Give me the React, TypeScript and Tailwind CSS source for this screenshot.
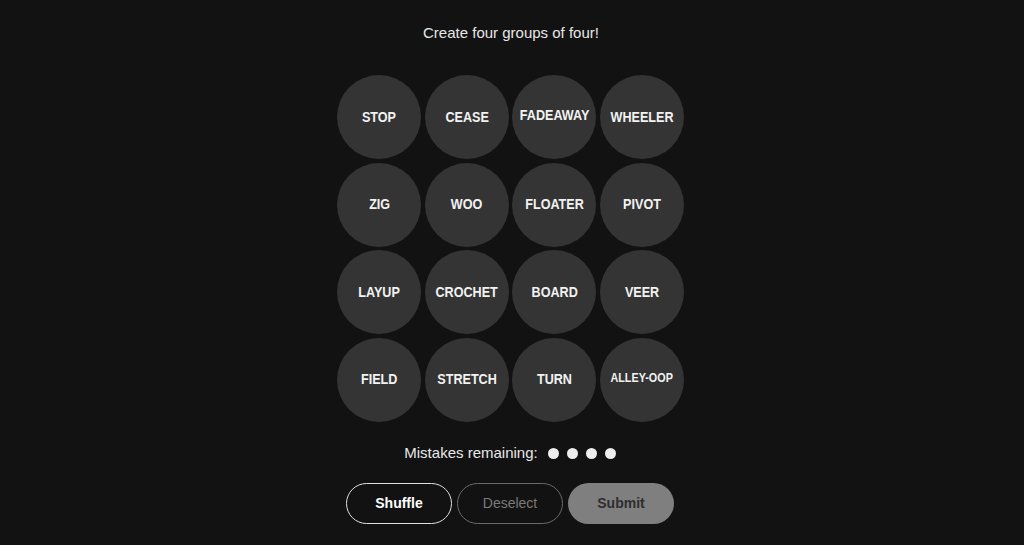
import React from "react";

const words = [
  "STOP", "CEASE", "FADEAWAY", "WHEELER",
  "ZIG", "WOO", "FLOATER", "PIVOT",
  "LAYUP", "CROCHET", "BOARD", "VEER",
  "FIELD", "STRETCH", "TURN", "ALLEY-OOP",
];

export default function App() {
  return (
    <div className="w-[1024px] h-[545px] bg-[#121212] flex flex-col items-center overflow-hidden" style={{ fontFamily: '"Liberation Sans", Arial, sans-serif' }}>
      <div className="mt-[23px] h-[20px] leading-[20px] text-[15px] text-[#e8e8e8] ml-[-2px]">Create four groups of four!</div>
      <div className="mt-[32px] grid grid-cols-[repeat(4,84px)] gap-x-[3.5px] gap-y-[3.5px] ml-[-3px]">
        {words.map((w) => (
          <div key={w} className="w-[84px] h-[84px] rounded-full bg-[#343434] flex items-center justify-center">
            <span
              className={`font-bold text-[#f2f2f2] scale-x-[0.9] whitespace-nowrap ${w === "ALLEY-OOP" ? "text-[12px] -mt-[3px]" : w === "FADEAWAY" ? "text-[14px] -mt-[3px]" : "text-[14px]"}`}
            >
              {w}
            </span>
          </div>
        ))}
      </div>
      <div className="mt-[21px] flex items-center h-[22px] ml-[-4px]">
        <span className="text-[15px] text-[#e8e8e8]">Mistakes remaining:</span>
        <div className="flex gap-[8px] ml-[10px]">
          {[0, 1, 2, 3].map((i) => (
            <div key={i} className="w-[11px] h-[11px] rounded-full bg-[#eeeeee]" />
          ))}
        </div>
      </div>
      <div className="mt-[18px] flex gap-[5px] ml-[-4px]">
        <button className="w-[106px] h-[41px] rounded-full border border-[#e0e0e0] text-white font-bold text-[14px]">Shuffle</button>
        <button className="w-[106px] h-[41px] rounded-full border border-[#6a6a6a] text-[#7a7a7a] text-[14px]">Deselect</button>
        <button className="w-[106px] h-[41px] rounded-full bg-[#7f7f7f] text-[#2e2e2e] font-bold text-[14px]">Submit</button>
      </div>
    </div>
  );
}
